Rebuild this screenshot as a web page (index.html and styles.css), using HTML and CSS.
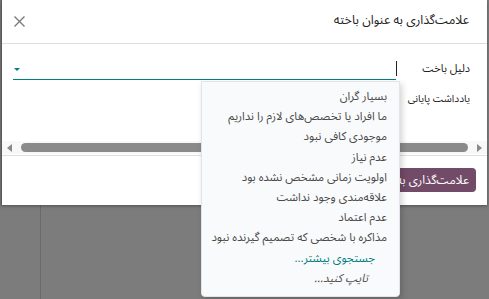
FILE: index.html
```html
<!DOCTYPE html>
<html lang="fa" dir="rtl">
<head>
<meta charset="utf-8">
<link rel="stylesheet" href="styles.css">
</head>
<body>
<div class="modal">
  <header class="hdr">
    <h4 class="title">علامت‌گذاری به عنوان باخته</h4>
    <button class="close" aria-label="بستن">
      <svg width="11" height="11" viewBox="0 0 11 11"><path d="M0.5 0.5 L10.5 10.5 M10.5 0.5 L0.5 10.5" stroke="#7a7a7a" stroke-width="1.4" fill="none"/></svg>
    </button>
  </header>
  <div class="body">
    <div class="form">
      <label class="lbl">دلیل باخت</label>
      <div class="field"><span class="cursor"></span><span class="caret"></span></div>
      <label class="lbl lbl-note">یادداشت پایانی</label>
      <div class="note"></div>
    </div>
    <div class="scroll">
      <span class="arrow right"></span>
      <span class="thumb"></span>
      <span class="arrow left"></span>
    </div>
  </div>
  <footer class="ftr">
    <button class="btn">علامت‌گذاری به عنوان باخته</button>
  </footer>
  <ul class="menu">
    <li>بسیار گران</li>
    <li>ما افراد یا تخصص‌های لازم را نداریم</li>
    <li>موجودی کافی نبود</li>
    <li>عدم نیاز</li>
    <li>اولویت زمانی مشخص نشده بود</li>
    <li>علاقه‌مندی وجود نداشت</li>
    <li>عدم اعتماد</li>
    <li>مذاکره با شخصی که تصمیم گیرنده نبود</li>
    <li class="more">جستجوی بیشتر...</li>
    <li class="type">تایپ کنید...</li>
  </ul>
</div>
</body>
</html>
```
FILE: styles.css
```css
html, body {
  margin: 0;
  padding: 0;
}
body {
  width: 489px;
  height: 299px;
  overflow: hidden;
  background: linear-gradient(to right, #7c7c7c 0, #7c7c7c 40px, #6a6a6a 40px, #6a6a6a 41px, #7c7c7c 41px);
  font-family: "Noto Sans Arabic", "DejaVu Sans", sans-serif;
  color: #212529;
}
.modal {
  position: relative;
  margin: 0 2px 0 1px;
  background: #fff;
  border-left: 1px solid #5a5a5a;
  box-shadow: 0 1px 3px rgba(0,0,0,.35);
  height: 205px;
  display: flex;
  flex-direction: column;
}
.hdr {
  height: 44px;
  border-bottom: 1px solid #dedede;
  display: flex;
  align-items: center;
  justify-content: space-between;
  padding: 0 18px 0 12px;
  box-sizing: border-box;
  flex: none;
}
.title {
  margin: 0;
  font-size: 12.5px;
  font-weight: normal;
  color: #222;
  line-height: 20px;
  margin-top: -4px;
}
.close {
  border: 0;
  background: none;
  padding: 0;
  width: 11px;
  height: 11px;
  display: flex;
  margin-top: 0;
}
.body {
  flex: none;
  height: 112px;
  display: flex;
  flex-direction: column;
  justify-content: space-between;
  border-bottom: 1px solid #dedede;
  box-sizing: border-box;
}
.form {
  display: grid;
  grid-template-columns: 74px 1fr;
  grid-template-rows: 22px 22px;
  row-gap: 8px;
  padding: 14px 17px 0 0;
  align-items: center;
}
.lbl {
  font-size: 11px;
  color: #222;
  line-height: 20px;
}
.lbl-note {
  font-size: 10.2px;
}
.field {
  position: relative;
  height: 21px;
  margin-left: 11px;
  border-bottom: 1px solid #017e84;
  display: flex;
  justify-content: space-between;
  align-items: center;
}
.cursor {
  width: 1px;
  height: 15px;
  background: #222;
  margin-right: -1px;
}
.caret {
  width: 0;
  height: 0;
  border-left: 3px solid transparent;
  border-right: 3px solid transparent;
  border-top: 3px solid #017e84;
  margin-left: 1px;
  margin-top: 2px;
}
.note { height: 20px; }
.scroll {
  height: 13px;
  margin-bottom: 1px;
  background: #f8f8f8;
  display: flex;
  align-items: center;
  padding: 0 5px;
  gap: 9px;
}
.thumb {
  flex: 1;
  height: 9px;
  border-radius: 5px;
  background: #8a8a8a;
}
.arrow {
  width: 0;
  height: 0;
  border-top: 4px solid transparent;
  border-bottom: 4px solid transparent;
}
.arrow.right { border-left: 5px solid #8a8a8a; }
.arrow.left { border-right: 5px solid #8a8a8a; }
.ftr {
  flex: 1;
  display: flex;
  align-items: flex-start;
  padding: 12px 11px 0 0;
}
.btn {
  border: 0;
  background: #714b67;
  color: #fff;
  font-family: inherit;
  font-size: 12px;
  height: 24px;
  width: 200px;
  border-radius: 4px;
  padding: 0 7px;
  text-align: right;
  white-space: nowrap;
  overflow: hidden;
}
.menu {
  position: absolute;
  top: 81px;
  right: 87px;
  width: 199px;
  height: 216px;
  margin: 0;
  padding: 4px 0 0 0;
  box-sizing: border-box;
  list-style: none;
  background: #f9fafb;
  border: 1px solid #e2e4e7;
  border-radius: 0 0 4px 4px;
  box-shadow: 2px 3px 6px rgba(0,0,0,.18);
}
.menu li {
  height: 20.2px;
  line-height: 20.2px;
  padding: 0 12px 0 0;
  font-size: 11.5px;
  color: #4a4a4a;
  white-space: nowrap;
}
.menu li.more {
  color: #017e84;
  padding-right: 24px;
}
.menu li.type {
  font-style: italic;
  padding-right: 31px;
  color: #555;
}
```
